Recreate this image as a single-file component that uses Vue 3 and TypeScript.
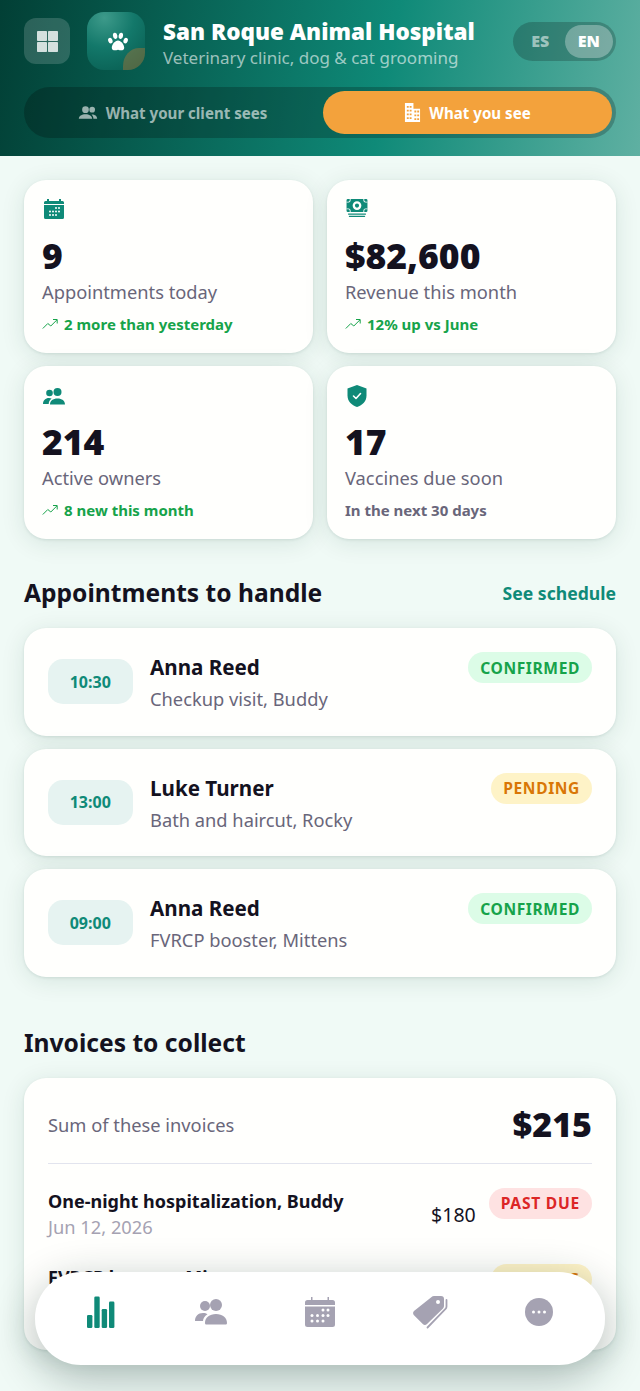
<script setup lang="ts">
const stats = [
  { icon: 'cal', value: '9', label: 'Appointments today', note: '2 more than yesterday', up: true },
  { icon: 'money', value: '$82,600', label: 'Revenue this month', note: '12% up vs June', up: true },
  { icon: 'people', value: '214', label: 'Active owners', note: '8 new this month', up: true },
  { icon: 'shield', value: '17', label: 'Vaccines due soon', note: 'In the next 30 days', up: false },
]
const appts = [
  { time: '10:30', name: 'Anna Reed', desc: 'Checkup visit, Buddy', status: 'CONFIRMED', cls: 'ok' },
  { time: '13:00', name: 'Luke Turner', desc: 'Bath and haircut, Rocky', status: 'PENDING', cls: 'pend' },
  { time: '09:00', name: 'Anna Reed', desc: 'FVRCP booster, Mittens', status: 'CONFIRMED', cls: 'ok' },
]
const invoices = [
  { name: 'One-night hospitalization, Buddy', date: 'Jun 12, 2026', amt: '$180', status: 'PAST DUE', cls: 'late' },
  { name: 'FVRCP booster, Mittens', date: 'Jun 20, 2026', amt: '$35', status: 'PENDING', cls: 'pend' },
]
</script>

<template>
  <div class="page">
    <header class="hero">
      <div class="top">
        <button class="menu" aria-label="Menu">
          <svg width="21" height="21" viewBox="0 0 21 21"><rect x="0" y="0" width="10" height="10" rx=".8" /><rect x="11" y="0" width="10" height="10" rx=".8" /><rect x="0" y="11" width="10" height="10" rx=".8" /><rect x="11" y="11" width="10" height="10" rx=".8" /></svg>
        </button>
        <div class="logo">
          <svg class="paw" width="22" height="21" viewBox="0 0 22 22"><ellipse cx="3" cy="9" rx="2.2" ry="3" transform="rotate(-22 3 9)" /><ellipse cx="8" cy="4" rx="2.3" ry="3.3" transform="rotate(-8 8 4)" /><ellipse cx="14" cy="4" rx="2.3" ry="3.3" transform="rotate(8 14 4)" /><ellipse cx="19" cy="9" rx="2.2" ry="3" transform="rotate(22 19 9)" /><path d="M11 9c-3 0-6.500 4-6.500 7.500 0 3 3 3.200 6.500 2.200 3.500 1 6.500.8 6.500-2.200C17.500 13 14 9 11 9z" /></svg>
          <span class="leaf"></span>
        </div>
        <div class="brand">
          <div class="title">San Roque Animal Hospital</div>
          <div class="sub">Veterinary clinic, dog &amp; cat grooming</div>
        </div>
        <div class="lang"><span>ES</span><span class="on">EN</span></div>
      </div>
      <div class="switch">
        <div class="tab">
          <svg width="20" height="20" viewBox="0 0 24 24" fill="currentColor"><circle cx="9" cy="8" r="4" /><circle cx="17" cy="8" r="3.400" /><path d="M1 19c0-3.500 3.600-5.500 8-5.500s8 2 8 5.500H1zM18.500 19c0-2.200-.8-4-2.300-5.300 3.800-.2 6.800 1.600 6.800 5.300h-4.500z" /></svg>
          What your client sees
        </div>
        <div class="tab active">
          <svg width="17" height="19" viewBox="0 0 18 20" fill="currentColor"><path fill-rule="evenodd" d="M1 0h9v6h7v14H1zM3 3v2h2V3zm3 0v2h2V3zM3 7v2h2V7zm3 0v2h2V7zM3 11v2h2v-2zm3 0v2h2v-2zM3 15v2h2v-2zm3 0v2h2v-2zm5-7v2h2V8zm3 0v2h2V8zm-3 4v2h2v-2zm3 0v2h2v-2zm-3 4v2h2v-2zm3 0v2h2v-2z" /></svg>
          What you see
        </div>
      </div>
    </header>

    <main class="main">
      <section class="stats">
        <article v-for="s in stats" :key="s.label" class="card stat">
          <div class="stat-icon">
            <svg v-if="s.icon === 'cal'" width="22" height="22" viewBox="0 0 22 22"><path fill="#0f8a78" d="M4 1h2v2h10V1h2v2h1.500A1.500 1.500 0 0 1 21 4.500V6H1V4.500A1.500 1.500 0 0 1 2.500 3H4zM1 7h20v12.500a1.500 1.500 0 0 1-1.500 1.500h-17A1.500 1.500 0 0 1 1 19.500z" /><g fill="#fff"><circle cx="13" cy="10" r="1" /><circle cx="16" cy="10" r="1" /><circle cx="7" cy="13.500" r="1" /><circle cx="10" cy="13.500" r="1" /><circle cx="13" cy="13.500" r="1" /><circle cx="16" cy="13.500" r="1" /><circle cx="7" cy="17" r="1" /><circle cx="10" cy="17" r="1" /><circle cx="13" cy="17" r="1" /></g></svg>
            <svg v-else-if="s.icon === 'money'" width="22" height="20" viewBox="0 0 24 22"><path fill="#0f8a78" fill-rule="evenodd" d="M2 1h20a1.500 1.500 0 0 1 1.500 1.500V14a1.500 1.500 0 0 1-1.500 1.500H2A1.500 1.500 0 0 1 .5 14V2.500A1.500 1.500 0 0 1 2 1zm10 2.500a4.800 4.800 0 1 0 0 9.600 4.800 4.800 0 0 0 0-9.600zm0 2.500a2.300 2.300 0 1 1 0 4.600 2.300 2.300 0 0 1 0-4.600z" /><path fill="#fff" d="M5 1v1.500A2.500 2.500 0 0 1 2.500 5H.5V4h2A1.500 1.500 0 0 0 4 2.500V1zM19 1v1.500A2.500 2.500 0 0 0 21.500 5h2V4h-2A1.500 1.500 0 0 1 20 2.500V1zM.5 11.500h2A2.500 2.500 0 0 1 5 14v1.500H4V14a1.500 1.500 0 0 0-1.500-1.500h-2zM23.500 11.500h-2A2.500 2.500 0 0 0 19 14v1.500h1V14a1.500 1.500 0 0 1 1.500-1.500h2z" /><rect x="2" y="17" width="20" height="1.300" rx=".6" fill="#0f8a78" /><rect x="3" y="19.500" width="18" height="1.300" rx=".6" fill="#0f8a78" /></svg>
            <svg v-else-if="s.icon === 'people'" class="people" width="22" height="22" viewBox="0 0 22 22" fill="#0f8a78"><circle cx="6.500" cy="7" r="3.300" /><circle cx="14.500" cy="6" r="4" /><path d="M0 18c0-3.500 2.500-6 6-6 1 0 1.800.2 2.600.6C6.700 14 5.700 16 5.700 18zM7 18.500c0-3.700 3-6 7.500-6s7.500 2.300 7.500 6z" /></svg>
            <svg v-else width="22" height="24" viewBox="0 0 22 24"><path fill="#0f8a78" d="M11 1l9.500 3.400v7c0 5.600-4 9.800-9.500 11.600C5.500 21.200 1.500 17 1.500 11.400v-7z" /><path fill="none" stroke="#fff" stroke-width="1.600" stroke-linecap="round" stroke-linejoin="round" d="M7.500 12l2.500 2.500 4.500-5" /></svg>
          </div>
          <div class="value">{{ s.value }}</div>
          <div class="label">{{ s.label }}</div>
          <div class="note" :class="{ up: s.up }">
            <svg v-if="s.up" width="17" height="12" viewBox="0 0 17 12" fill="none" stroke="currentColor" stroke-width="1"><path d="M.8 10.500l5-5 3 2.500 6-6M11 1.500h4.200v4" /></svg>
            {{ s.note }}
          </div>
        </article>
      </section>

      <section class="sec first">
        <div class="sec-head">
          <h2>Appointments to handle</h2>
          <a class="link">See schedule</a>
        </div>
        <div class="list">
          <article v-for="a in appts" :key="a.time" class="card appt">
            <div class="time">{{ a.time }}</div>
            <div class="who">
              <div class="name">{{ a.name }}</div>
              <div class="desc">{{ a.desc }}</div>
            </div>
            <span class="badge" :class="a.cls">{{ a.status }}</span>
          </article>
        </div>
      </section>

      <section class="sec second">
        <div class="sec-head"><h2>Invoices to collect</h2></div>
        <div class="card inv">
          <div class="sum">
            <span>Sum of these invoices</span>
            <strong>$215</strong>
          </div>
          <div v-for="i in invoices" :key="i.name" class="inv-row">
            <div class="inv-text">
              <div class="inv-name">{{ i.name }}</div>
              <div class="inv-date">{{ i.date }}</div>
            </div>
            <span class="amt">{{ i.amt }}</span>
            <span class="badge" :class="i.cls">{{ i.status }}</span>
          </div>
        </div>
      </section>
    </main>

    <nav class="nav">
      <div class="nav-item">
        <svg class="bars" width="27.500" height="32" viewBox="0 0 27.500 32" fill="#0f8a78"><rect x="0" y="19" width="5.400" height="13" rx="1.300" /><rect x="7.300" y="0.500" width="5.400" height="31.500" rx="1.300" /><rect x="14.700" y="13" width="5.400" height="19" rx="1.300" /><rect x="22" y="5.500" width="5.400" height="26.500" rx="1.300" /></svg>
      </div>
      <div class="nav-item">
        <svg width="32" height="28" viewBox="0 0 32 28" fill="#a5a2b2"><circle cx="10" cy="8" r="5" /><circle cx="21" cy="7" r="6" /><path d="M0 23c0-4.500 3-8 8-8 2 0 3.300.4 4.500 1.200C9.500 18 8 20.500 8 23H0zM10 25c0-5.500 4.500-9 11-9s11 3.500 11 9c0 1-.7 1.500-1.500 1.500h-19C10.700 26.500 10 26 10 25z" /></svg>
      </div>
      <div class="nav-item">
        <svg width="30" height="32" viewBox="0 0 30 32"><path fill="#a5a2b2" d="M6 1h1.500v3h15V1H24v3h3.500A2.500 2.500 0 0 1 30 6.500V9H0V6.500A2.500 2.500 0 0 1 2.500 4H6zM0 10.500h30v18a2.500 2.500 0 0 1-2.500 2.500h-25A2.500 2.500 0 0 1 0 28.500z" /><g fill="#fff"><circle cx="18" cy="14" r="1.500" /><circle cx="23" cy="14" r="1.500" /><circle cx="7" cy="19.500" r="1.500" /><circle cx="12.500" cy="19.500" r="1.500" /><circle cx="18" cy="19.500" r="1.500" /><circle cx="23" cy="19.500" r="1.500" /><circle cx="7" cy="25" r="1.500" /><circle cx="12.500" cy="25" r="1.500" /><circle cx="18" cy="25" r="1.500" /></g></svg>
      </div>
      <div class="nav-item">
        <svg width="36" height="34" viewBox="0 0 36 34"><path fill="#a5a2b2" fill-rule="evenodd" d="M22 1h7a3 3 0 0 1 3 3v7c0 1-.3 1.700-1 2.400L15 29c-1.200 1.200-3 1.200-4.200 0L2 20.200c-1.200-1.200-1.200-3 0-4.200L19.600 2C20.300 1.300 21 1 22 1zm4 4a2 2 0 1 0 0 4 2 2 0 0 0 0-4z" /><path fill="none" stroke="#a5a2b2" stroke-width="1.800" stroke-linecap="round" d="M34.500 5v6.500c0 1-.3 1.700-1 2.400L15.500 32.500" /></svg>
      </div>
      <div class="nav-item">
        <svg width="28" height="28" viewBox="0 0 28 28"><circle cx="14" cy="14" r="14" fill="#a5a2b2" /><circle cx="8.500" cy="14" r="1.500" fill="#fff" /><circle cx="14" cy="14" r="1.500" fill="#fff" /><circle cx="19.500" cy="14" r="1.500" fill="#fff" /></svg>
      </div>
    </nav>
  </div>
</template>

<style>
html, body { margin: 0; background: #f0faf6; }
</style>

<style scoped>
.page {
  height: 1391px;
  overflow: hidden;
  background: #f0faf6;
  font-family: "Noto Sans", sans-serif;
  color: #14121f;
  position: relative;
}
.hero {
  height: 156px;
  box-sizing: border-box;
  padding: 12px 24px 0;
  background: linear-gradient(100deg, #023f35 0%, #0f8a78 60%, #5fb0a2 100%);
}
.top { display: flex; align-items: center; height: 58px; }
.menu {
  width: 46px; height: 46px; border: 0; padding: 0; border-radius: 12px;
  background: rgba(255,255,255,.16);
  display: flex; align-items: center; justify-content: center;
  flex: none;
}
.menu svg { fill: rgba(255,255,255,.8); }
.logo {
  width: 58px; height: 58px; border-radius: 17px; margin-left: 17px; flex: none;
  background: radial-gradient(circle at 30% 10%, #3d9a8a 0%, #13786a 45%, #075a4e 100%);
  display: flex; align-items: center; justify-content: center;
  position: relative; overflow: hidden;
}
.paw { fill: #fff; margin: 2px 0 0 4px; }
.leaf {
  position: absolute; right: -5px; bottom: -8px; width: 27px; height: 30px;
  border-radius: 60% 0 60% 0;
  background: rgba(190,120,50,.4);
}
.brand { margin: 6px 0 0 18px; align-self: flex-start; flex: 1; min-width: 0; }
.title { font-size: 22.5px; line-height: 28px; font-weight: 900; color: #fff; white-space: nowrap; }
.sub { font-size: 17px; line-height: 24px; color: rgba(255,255,255,.6); white-space: nowrap; }
.lang {
  flex: none; display: flex; width: 103px; height: 39px; box-sizing: border-box; padding: 3px;
  border-radius: 20px; background: rgba(0,0,0,.2);
  font-size: 16px; font-weight: 900; color: rgba(255,255,255,.55);
}
.lang span { flex: 1; display: flex; align-items: center; justify-content: center; border-radius: 17px; }
.lang span.on { background: rgba(255,255,255,.3); color: #fff; }
.switch {
  display: flex; gap: 6px; margin-top: 17px; height: 51px; padding: 4px; box-sizing: border-box;
  border-radius: 26px; background: rgba(0,0,0,.22);
}
.tab {
  flex: 1; display: flex; align-items: center; justify-content: center; gap: 8px;
  font-size: 15.100px; font-weight: 700; color: rgba(255,255,255,.6); border-radius: 22px;
}
.tab.active { background: #f3a23c; color: #fff; }
.main { padding: 24px 24px 0; }
.stats { display: grid; grid-template-columns: 1fr 1fr; gap: 13px 14px; }
.card {
  background: #fffffd; border-radius: 22px;
  box-shadow: 0 1px 3px rgba(8,60,50,.1), 0 4px 24px rgba(8,60,50,.11);
}
.stat { height: 173px; box-sizing: border-box; padding: 18px 18px 0; }
.stat-icon { height: 24px; display: flex; align-items: flex-start; padding-left: 1px; }
.people { margin-top: 2px; }
.value { margin-top: 11px; font-size: 35.500px; line-height: 44px; font-weight: 900; }
.label { font-size: 18.300px; line-height: 24px; color: #69667a; margin-top: 3px; }
.note {
  margin-top: 9px; font-size: 15px; line-height: 22px; font-weight: 700; color: #69667a;
  display: flex; align-items: center; gap: 5px;
}
.note.up { color: #16a34a; }
.sec-head { display: flex; align-items: center; justify-content: space-between; height: 30px; }
h2 { margin: 0; font-size: 24.600px; line-height: 30px; font-weight: 700; }
.link { color: #0f8a78; font-size: 17.600px; font-weight: 700; }
.first { margin-top: 39px; }
.list { margin-top: 20px; display: flex; flex-direction: column; gap: 13px; }
.appt {
  height: 107.600px; box-sizing: border-box; padding: 24px; display: flex; align-items: flex-start;
  position: relative;
}
.time {
  width: 84.500px; height: 45px; margin-top: 7px; border-radius: 15px; background: #e6f3f1;
  color: #0f8a78; font-size: 16px; font-weight: 700;
  display: flex; align-items: center; justify-content: center; flex: none;
}
.who { margin-left: 17.500px; flex: 1; }
.name { font-size: 20.600px; line-height: 30px; font-weight: 700; }
.desc { font-size: 18.300px; line-height: 24px; margin-top: 5px; color: #69667a; }
.badge {
  height: 31px; padding: 0 12px; border-radius: 16px; font-size: 15.600px; font-weight: 700;
  letter-spacing: .6px; display: inline-flex; align-items: center; flex: none;
}
.ok { background: #dcfce7; color: #16a34a; }
.pend { background: #fef3c7; color: #d97706; }
.late { background: #fee2e2; color: #dc2626; letter-spacing: .75px; }
.second { margin-top: 51px; }
.inv { margin-top: 20px; height: 272px; box-sizing: border-box; padding: 24px; overflow: hidden; }
.sum {
  display: flex; align-items: center; justify-content: space-between;
  padding-bottom: 16px; border-bottom: 1px solid #e2e4ee; height: 45px;
}
.sum span { font-size: 18.300px; color: #69667a; }
.sum strong { font-size: 34px; font-weight: 900; line-height: 44px; }
.inv-row { display: flex; align-items: flex-start; margin-top: 25px; }
.sum + .inv-row { margin-top: 24px; }
.inv-text { flex: 1; min-width: 0; margin-top: -1px; }
.inv-name { font-size: 18px; line-height: 28px; font-weight: 700; }
.inv-date { font-size: 18.300px; line-height: 24px; color: #a5a2b2; }
.amt { font-size: 19.500px; margin: 13px 13px 0 0; }
.nav {
  position: fixed; left: 35px; width: 570px; top: 1272px; height: 93px;
  background: #fff; border-radius: 46px;
  box-shadow: 0 12px 44px rgba(8,40,35,.32);
  display: flex; align-items: flex-start; justify-content: center;
  padding: 22px 0 0; box-sizing: border-box;
}
.nav-item { width: 109.500px; height: 36px; display: flex; align-items: center; justify-content: center; }
.bars { margin-top: -1px; }
</style>
